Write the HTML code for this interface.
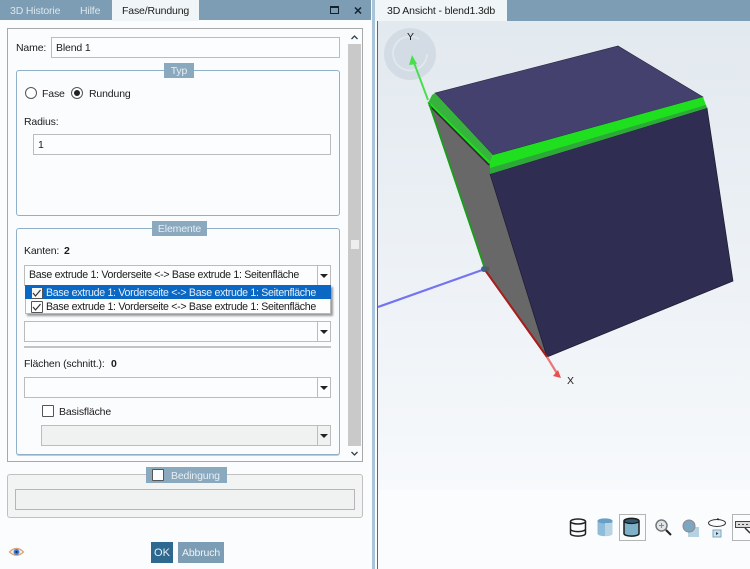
<!DOCTYPE html>
<html><head><meta charset="utf-8"><style>
html,body{margin:0;padding:0;width:750px;height:569px;overflow:hidden;background:#fbfcfe}
body{position:relative;font-family:"Liberation Sans",sans-serif;font-size:10.5px;color:#1c1c1c}
.a{position:absolute;box-sizing:border-box}
.t{position:absolute;white-space:nowrap;line-height:14px;font-size:10.5px;letter-spacing:-.15px;margin-top:1px}
.l{font-size:10.6px;letter-spacing:-.3px}
.inp{position:absolute;box-sizing:border-box;background:#fcfdfe;border:1px solid #bcbcbc}
.grp{position:absolute;box-sizing:border-box;border:1px solid #8fb0c6;border-radius:3px}
.ttl{position:absolute;box-sizing:border-box;background:#8aa9bf;color:#e6eef3;text-align:center;line-height:16px;font-size:10.5px;letter-spacing:-.15px}
.arr{position:absolute;width:0;height:0;border-left:4px solid transparent;border-right:4px solid transparent;border-top:4px solid #222}
.sep{position:absolute;top:0;bottom:0;width:1px;background:#bcbcbc}
.cb{position:absolute;box-sizing:border-box;width:12px;height:12px;border:1px solid #555;background:#fff;border-radius:1px}
svg{position:absolute;left:0;top:0;overflow:visible}
</style></head><body>

<!-- Left header -->
<div class="a" style="left:0;top:0;width:371px;height:20px;background:#7c9db4"></div>
<div class="a" style="left:112px;top:0;width:87px;height:21px;background:#f0f5f8"></div>
<div class="t" style="left:10px;top:3px;color:#dbe6ed">3D Historie</div>
<div class="t" style="left:80px;top:3px;color:#dbe6ed">Hilfe</div>
<div class="t" style="left:122px;top:3px">Fase/Rundung</div>
<div class="a" style="left:330px;top:6px;width:9px;height:8px;border:1px solid #14222e;border-top-width:2px"></div>
<svg width="750" height="569"><path d="M355 7.500l6 6M361 7.500l-6 6" stroke="#14222e" stroke-width="1.500" fill="none"/></svg>

<!-- Divider -->
<div class="a" style="left:372px;top:0;width:3px;height:569px;background:#a9c4d8"></div>

<!-- Main box -->
<div class="a" style="left:7px;top:28px;width:356px;height:434px;border:1px solid #a8a8a8;background:#fbfcfe"></div>
<div class="t" style="left:16px;top:40px">Name:</div>
<div class="inp" style="left:51px;top:37px;width:289px;height:21px"></div>
<div class="t" style="left:56px;top:40px">Blend 1</div>

<!-- Typ -->
<div class="grp" style="left:16px;top:70px;width:324px;height:146px"></div>
<div class="ttl" style="left:164px;top:63px;width:30px;height:15px">Typ</div>
<div class="a" style="left:25px;top:87px;width:12px;height:12px;border:1px solid #555;border-radius:50%;background:#fff"></div>
<div class="t" style="left:42px;top:86px">Fase</div>
<div class="a" style="left:71px;top:87px;width:12px;height:12px;border:1px solid #555;border-radius:50%;background:#fff"></div>
<div class="a" style="left:74px;top:90px;width:6px;height:6px;border-radius:50%;background:#222"></div>
<div class="t" style="left:89px;top:86px">Rundung</div>
<div class="t" style="left:24px;top:114px">Radius:</div>
<div class="inp" style="left:33px;top:134px;width:298px;height:21px"></div>
<div class="t" style="left:38px;top:137px">1</div>

<!-- Elemente -->
<div class="grp" style="left:16px;top:228px;width:324px;height:227px;box-shadow:0 1px 0 #b8cedd"></div>
<div class="ttl" style="left:152px;top:221px;width:55px;height:15px">Elemente</div>
<div class="t" style="left:24px;top:243px">Kanten:</div>
<div class="t" style="left:64px;top:243px;font-weight:bold">2</div>

<div class="inp" style="left:24px;top:265px;width:307px;height:21px"><div class="sep" style="left:292px"></div><div class="arr" style="left:295px;top:8px"></div></div>
<div class="t l" style="left:29px;top:267px">Base extrude 1: Vorderseite &lt;-&gt; Base extrude 1: Seitenfläche</div>

<div class="inp" style="left:24px;top:321px;width:307px;height:21px"><div class="sep" style="left:292px"></div><div class="arr" style="left:295px;top:8px"></div></div>

<div class="a" style="left:25px;top:285px;width:306px;height:29px;background:#fdfdfe;border:1px solid #b8b8b8;box-shadow:2px 2px 2px rgba(0,0,0,.4)"></div>
<div class="a" style="left:25px;top:285px;width:306px;height:14px;background:#0a68c4"></div>
<div class="cb" style="left:31px;top:287px;background:#f4f6f8"></div>
<div class="cb" style="left:31px;top:301px"></div>
<svg width="750" height="569"><path d="M33 293l2.500 3 5-6M33 307l2.500 3 5-6" fill="none" stroke="#333" stroke-width="1.200"/></svg>
<div class="t l" style="left:46px;top:285px;color:#e6f0fa">Base extrude 1: Vorderseite &lt;-&gt; Base extrude 1: Seitenfläche</div>
<div class="t l" style="left:46px;top:299px">Base extrude 1: Vorderseite &lt;-&gt; Base extrude 1: Seitenfläche</div>

<div class="a" style="left:24px;top:346px;width:307px;height:2px;background:#c4c4c4"></div>
<div class="t" style="left:24px;top:356px">Flächen (schnitt.):</div>
<div class="t" style="left:111px;top:356px;font-weight:bold">0</div>
<div class="inp" style="left:24px;top:377px;width:307px;height:21px"><div class="sep" style="left:292px"></div><div class="arr" style="left:295px;top:8px"></div></div>

<div class="cb" style="left:42px;top:405px"></div>
<div class="t" style="left:59px;top:404px">Basisfläche</div>
<div class="inp" style="left:41px;top:425px;width:290px;height:21px;background:#f0f1f1"><div class="sep" style="left:275px"></div><div class="arr" style="left:278px;top:8px"></div></div>

<!-- Scrollbar -->
<div class="a" style="left:348px;top:44px;width:13px;height:402px;background:#c9c9c9"></div>
<div class="a" style="left:351px;top:240px;width:8px;height:9px;background:#eeeeee"></div>
<svg width="750" height="569"><path d="M351.500 39l3-3 3 3M351.500 452l3 3 3-3" fill="none" stroke="#33404a" stroke-width="1.300"/></svg>

<!-- Bedingung -->
<div class="a" style="left:7px;top:474px;width:356px;height:44px;background:#f2f3f3;border:1px solid #c0c0c0;border-radius:3px"></div>
<div class="a" style="left:15px;top:489px;width:340px;height:21px;background:#f0f1f1;border:1px solid #b8b4b8"></div>
<div class="ttl" style="left:146px;top:467px;width:81px;height:16px"></div>
<div class="cb" style="left:152px;top:469px;background:#fbfcfd"></div>
<div class="t" style="left:171px;top:468px;color:#e6eef3">Bedingung</div>

<!-- Buttons -->
<div class="a" style="left:151px;top:542px;width:22px;height:21px;background:#2e6a90;color:#e8f0f5;text-align:center;line-height:22px;font-size:11px">OK</div>
<div class="a" style="left:178px;top:542px;width:46px;height:21px;background:#7c9db4;color:#eef3f6;text-align:center;line-height:22px;font-size:10.5px;letter-spacing:-.15px">Abbruch</div>

<!-- Eye -->
<svg width="750" height="569">
<path d="M9.500 552q7-7 14 0q-7 6.500-14 0z" fill="#f6f2ea" stroke="#d8a878" stroke-width="1.300"/>
<circle cx="16.500" cy="552" r="3" fill="#4a80d8"/><circle cx="16.500" cy="552" r="1.200" fill="#1c3560"/>
</svg>

<!-- Right header -->
<div class="a" style="left:375px;top:0;width:375px;height:21px;background:#7c9db4"></div>
<div class="a" style="left:375px;top:0;width:132px;height:21px;background:#f0f5f8"></div>
<div class="t" style="left:387px;top:3px">3D Ansicht - blend1.3db</div>

<!-- Viewport -->
<div class="a" style="left:377px;top:21px;width:373px;height:489px;background:linear-gradient(#e2e9ef 0%,#eff3f7 60%,#f8fafc 100%)"></div>
<div class="a" style="left:377px;top:490px;width:373px;height:79px;background:#fbfcfe"></div>
<div class="a" style="left:377px;top:21px;width:1px;height:548px;background:#5c6870"></div>

<svg width="750" height="569">
  <!-- gizmo -->
  <circle cx="410" cy="54" r="26" fill="#d3dce5"/>
  <path d="M427 54a17 17 0 1 1-8-15" fill="none" stroke="#e0e7ed" stroke-width="1.800"/>
  <!-- faces -->
  <polygon points="435,93 618,46 703,97 493,155" fill="#45416f" stroke="#23223a" stroke-width=".6"/>
  <polygon points="428,103 490,163 490,174 547,357 485,269" fill="#686868"/>
  <polygon points="490,174 707,108 733,281 547,357" fill="#2f2d51" stroke="#1c1b30" stroke-width=".7"/>
  <!-- green bevels -->
  <polygon points="432,95 435,93 493,155 490,163 428,103" fill="#37b23c"/>
  <path d="M428 102L490 163" stroke="#1fe01f" stroke-width="2" fill="none"/>
  <path d="M429 105L489 165" stroke="#2a2a2a" stroke-width="1.500" fill="none"/>
  <polygon points="493,155 703,97 707,108 490,174 490,163" fill="#1fe01f"/>
  <polygon points="490,168 706,105 707,108 490,174" fill="#2ea838"/>
  <!-- axes -->
  <path d="M485 269L378 307" stroke="#7474f2" stroke-width="2.200" fill="none"/>
  <path d="M429 103L485 269" stroke="#16a016" stroke-width="1.800" fill="none"/>
  <path d="M428 100L413 60" stroke="#47e04c" stroke-width="2" fill="none"/>
  <polygon points="412,55 417,64 409,65" fill="#47e04c"/>
  <path d="M485 270L547 357" stroke="#a81c1c" stroke-width="2" fill="none"/>
  <path d="M547 357L558 375" stroke="#e87878" stroke-width="2.200" fill="none"/>
  <polygon points="561,378 553,376 558,370" fill="#e85050"/>
  <circle cx="484" cy="269" r="3" fill="#3c6488"/>
  <circle cx="487" cy="269" r="2.500" fill="#555" opacity=".7"/>

  <!-- toolbar -->
  <g fill="none" stroke="#222" stroke-width="1.500">
    <ellipse cx="578" cy="521.500" rx="7.500" ry="2.500"/>
    <path d="M570.500 521.500v12c0 3.500 15 3.500 15 0v-12M570.500 529c0 3.500 15 3.500 15 0"/>
  </g>
  <path d="M597.500 521c0-3.500 15-3.500 15 0v12.500c0 3.500-15 3.500-15 0z" fill="#8fbcd8"/>
  <ellipse cx="605" cy="521" rx="7.500" ry="2.500" fill="#68a0c4"/>
  <path d="M605 523h7.500v11q-3 2-7.500 2z" fill="#b8d4e4"/>
  <rect x="619.500" y="514.500" width="26" height="26" fill="#fbfcfe" stroke="#b4b4b4"/>
  <path d="M624 521c0-3.500 15-3.500 15 0v12.500c0 3.500-15 3.500-15 0z" fill="#7fb2c8" stroke="#1c1c1c" stroke-width="1.500"/>
  <ellipse cx="631.500" cy="521" rx="7.500" ry="2.500" fill="#2f5a72" stroke="#1c1c1c" stroke-width="1.300"/>
  <circle cx="661.500" cy="525.500" r="5.500" fill="#dfe5e9" stroke="#777" stroke-width="1.500"/>
  <path d="M666 530l5 5" stroke="#222" stroke-width="2"/>
  <path d="M659 525.500h5M661.500 523v5" stroke="#888"/>
  <rect x="688" y="527" width="11" height="10" fill="#b4d2e2"/>
  <circle cx="689" cy="526" r="6" fill="#7ea6c0" stroke="#8a8a8a"/>
  <ellipse cx="717" cy="523" rx="8.500" ry="3.500" fill="none" stroke="#333"/>
  <path d="M717 519l2 .5" stroke="#222" stroke-width="1.500"/>
  <rect x="713" y="530" width="8" height="7" fill="#cfe0ea" stroke="#7ea6c0"/>
  <path d="M716 532l2.500 1.500-2.500 1.500z" fill="#1c3c55"/>
  <rect x="732.500" y="514.500" width="20" height="26" fill="#fbfcfe" stroke="#b4b4b4"/>
  <rect x="735.500" y="521.500" width="16" height="6" fill="#ddd" stroke="#444"/>
  <path d="M738 524.500h2M742 524.500h2M746 524.500h2" stroke="#444"/>
  <path d="M745 528l5 5" stroke="#333" stroke-width="1.500"/>
</svg>
<div class="t" style="left:407px;top:29px">Y</div>
<div class="t" style="left:567px;top:373px">X</div>
</body></html>
